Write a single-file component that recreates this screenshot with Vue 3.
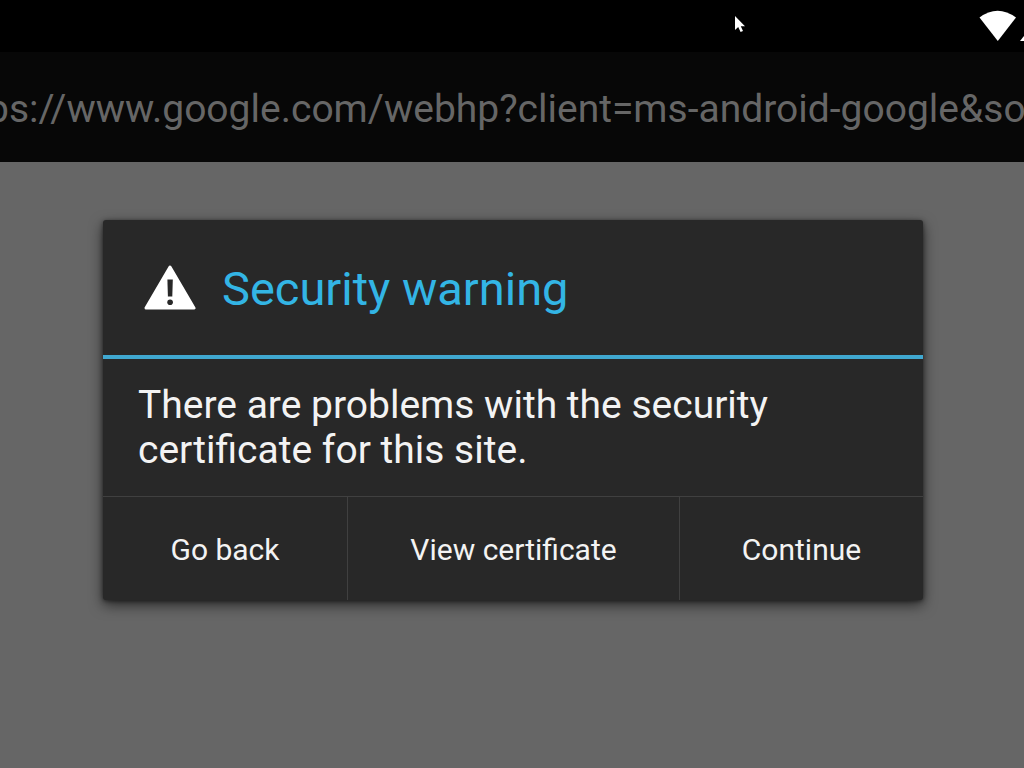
<script setup>
import { onMounted, ref } from 'vue'

const address = ref('https://www.google.com/webhp?client=ms-android-google&source')
const addressField = ref(null)
const actions = ['Go back', 'View certificate', 'Continue']

onMounted(() => {
  addressField.value.scrollLeft = 60
})
</script>

<template>
  <div class="screen">
    <header class="status-bar">
      <svg class="pointer" width="14" height="20" viewBox="0 0 14 20" aria-hidden="true">
        <path d="M1 1V15L4.2 12L6.6 17L9 16L6.8 11.2H11Z" fill="#fff" />
      </svg>
      <svg class="wifi" width="38" height="32" viewBox="0 0 38 32" aria-hidden="true">
        <path d="M0.5 7.5Q18.5 -6 37 7.5L18.8 31Z" fill="#fff" />
      </svg>
      <svg class="signal" width="4" height="5" viewBox="0 0 4 5" aria-hidden="true">
        <path d="M0 5L4 0V5Z" fill="#fff" />
      </svg>
    </header>
    <div class="address-bar">
      <input ref="addressField" v-model="address" class="address" type="text" aria-label="Address" spellcheck="false" />
    </div>
    <main class="page">
      <section class="dialog" role="alertdialog" aria-labelledby="warning-title" aria-describedby="warning-text">
        <div class="heading">
          <svg class="warning" width="52" height="46" viewBox="0 0 52 46" aria-hidden="true">
            <path d="M26 2L50 43H2Z" fill="#fff" stroke="#fff" stroke-width="3" stroke-linejoin="round" />
            <path d="M23.4 14.5H28.8L28.3 31.5H23.9Z" fill="#282828" />
            <circle cx="26.1" cy="37.3" r="2.8" fill="#282828" />
          </svg>
          <h1 id="warning-title" class="title">Security warning</h1>
        </div>
        <p id="warning-text" class="message">There are problems with the security certificate for this site.</p>
        <div class="actions">
          <button v-for="action in actions" :key="action" type="button" class="action">{{ action }}</button>
        </div>
      </section>
    </main>
  </div>
</template>

<style>
body {
  margin: 0;
  background: #666;
}
</style>

<style scoped>
.screen {
  display: flex;
  flex-direction: column;
  min-height: 100vh;
  overflow: hidden;
  background: #666;
  font-family: Roboto, sans-serif;
}
.status-bar {
  position: relative;
  display: flex;
  justify-content: flex-end;
  height: 52px;
  background: #000;
}
.pointer {
  position: absolute;
  left: 734px;
  top: 15px;
}
.wifi {
  margin: 10px 3px 0 0;
}
.signal {
  margin-top: 36px;
  flex: none;
}
.address-bar {
  display: flex;
  height: 110px;
  background: #070707;
}
.address {
  flex: 1;
  min-width: 0;
  padding: 4px 0 0;
  border: 0;
  outline: 0;
  background: transparent;
  color: #666;
  font: 39px/48px Roboto, sans-serif;
}
.page {
  padding: 58px 101px 58px 103px;
}
.dialog {
  border-radius: 3px;
  background: #282828;
  box-shadow: 0 5px 14px rgba(0, 0, 0, 0.6), 0 1px 4px rgba(0, 0, 0, 0.5);
}
.heading {
  display: flex;
  align-items: center;
  gap: 26px;
  height: 135px;
  padding: 0 41px;
  border-bottom: 4px solid #40a8d0;
}
.title {
  margin: 0;
  padding-top: 2px;
  color: #33b5e5;
  font-size: 47px;
  font-weight: 400;
  line-height: 56px;
}
.message {
  margin: 0;
  padding: 24px 35px 23px;
  color: #f3f3f3;
  font-size: 39px;
  line-height: 45px;
}
.actions {
  display: grid;
  grid-template-columns: 61fr 83fr 61fr;
  border-top: 1px solid #404040;
}
.action {
  height: 103px;
  padding: 2px 0 0;
  border: 0;
  border-left: 1px solid #404040;
  background: transparent;
  color: #f3f3f3;
  font: 30px/36px Roboto, sans-serif;
}
.action:first-child {
  border-left: 0;
}
</style>
